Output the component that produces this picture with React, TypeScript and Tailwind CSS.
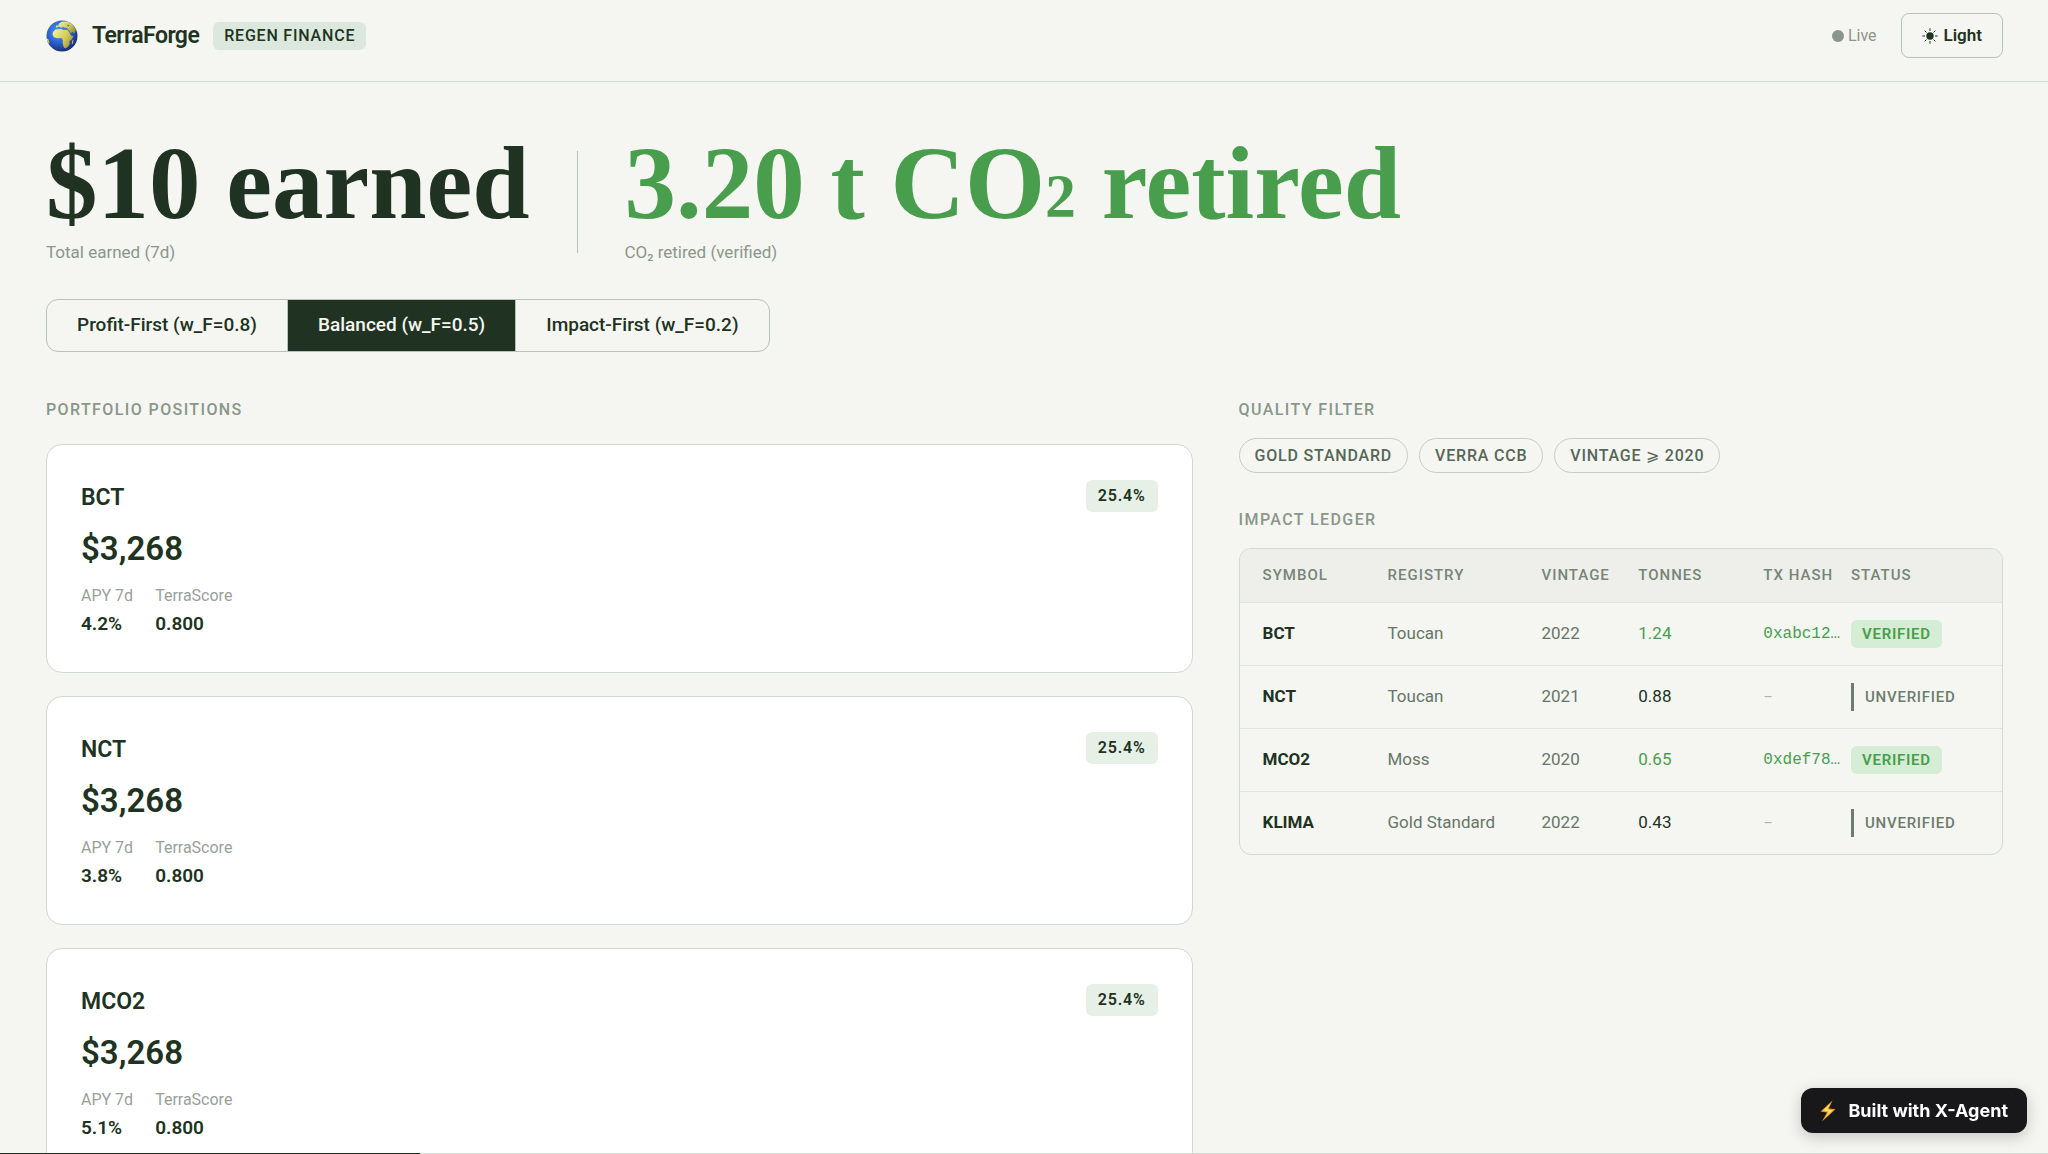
import { useState } from "react"
import { clsx } from "clsx"

type Position = { symbol: string; value: string; weight: string; apy: string; score: string }

type LedgerEntry = {
    symbol: string
    registry: string
    vintage: number
    tonnes: string
    hash?: string
}

const modes = ["Profit-First (w_F=0.8)", "Balanced (w_F=0.5)", "Impact-First (w_F=0.2)"]

const filters = ["GOLD STANDARD", "VERRA CCB", "VINTAGE ⩾ 2020"]

const positions: Position[] = [
    { symbol: "BCT", value: "$3,268", weight: "25.4%", apy: "4.2%", score: "0.800" },
    { symbol: "NCT", value: "$3,268", weight: "25.4%", apy: "3.8%", score: "0.800" },
    { symbol: "MCO2", value: "$3,268", weight: "25.4%", apy: "5.1%", score: "0.800" },
]

const ledger: LedgerEntry[] = [
    { symbol: "BCT", registry: "Toucan", vintage: 2022, tonnes: "1.24", hash: "0xabc12…" },
    { symbol: "NCT", registry: "Toucan", vintage: 2021, tonnes: "0.88" },
    { symbol: "MCO2", registry: "Moss", vintage: 2020, tonnes: "0.65", hash: "0xdef78…" },
    { symbol: "KLIMA", registry: "Gold Standard", vintage: 2022, tonnes: "0.43" },
]

function GlobeLogo() {
    return (
        <svg viewBox="0 0 32 32" className="size-8 shrink-0" aria-hidden="true">
            <defs>
                <radialGradient id="ocean" cx="0.4" cy="0.35" r="0.65">
                    <stop offset="0" stopColor="#4c9df0" />
                    <stop offset="0.6" stopColor="#2a5fcb" />
                    <stop offset="1" stopColor="#1c2f78" />
                </radialGradient>
                <linearGradient id="land" x1="0" y1="0.2" x2="1" y2="0.8">
                    <stop offset="0" stopColor="#f0f29a" />
                    <stop offset="0.6" stopColor="#cfc653" />
                    <stop offset="1" stopColor="#8d8a3c" />
                </linearGradient>
                <clipPath id="sphere">
                    <circle cx="16" cy="16" r="15.5" />
                </clipPath>
            </defs>
            <circle cx="16" cy="16" r="15.5" fill="url(#ocean)" />
            <g clipPath="url(#sphere)" fill="url(#land)">
                <path d="M7 12 9.500 9.500 15 9l2.500 1 4-.3 2 3 1.500 3 2.500.3-1.500 3-2.500 2.200.2 3-2 2.800-2.200 1.500-1.800-1.200-1-4 .2-3-1.600-2.300-4 .2-3.400-1-1.400-2.800z" />
                <path d="M10 7.800 10.300 5.500 12.500 5.600 13 3.500 16 1.500 22 1.500 27 5 30 10 28.500 13.500 26.500 12 24.500 13 22 9 18.500 8 17 6.800 15.500 7.800 13 6.500z" />
                <path d="M26.500 20.500 27.500 20 27 23.500 25.800 24z" />
                <path d="M0 18 2.500 19.500 3.500 22 2.800 25 0 23z" />
            </g>
            <path d="M16.500 7.500 20.500 8 22 9.200 18 8.800zM21.500 4.500 23.500 5.500 22.800 6.500 21 5.500z" fill="#3b74cf" />
        </svg>
    )
}

function SunIcon() {
    return (
        <svg viewBox="0 0 16 16" className="size-4" fill="none" stroke="currentColor" aria-hidden="true">
            <circle cx="8" cy="8" r="3.700" fill="currentColor" stroke="none" />
            <path d="M8 .3v2.700M8 13v2.700M.3 8H3M13 8h2.700M2.600 2.600l1.900 1.900M11.500 11.500l1.900 1.900M13.400 2.600l-1.900 1.900M4.500 11.500l-1.900 1.900" />
        </svg>
    )
}

function BoltIcon() {
    return (
        <svg viewBox="0 0 16 22" className="h-[22px] w-4" aria-hidden="true">
            <path d="M12.500 .5 .5 11.500 7 12.500 2 21.500 15.500 9.200 8.800 8.600z" fill="#f39b1d" />
            <path d="M10.500 3.500 3.200 10.600 8.800 11.500 5.500 17.500 13 10 7 9.400z" fill="#ffe27a" />
        </svg>
    )
}

function SectionTitle({ children }: { children: string }) {
    return <h2 className="text-base leading-5 font-medium tracking-[1.4px] text-[#8a968b]">{children}</h2>
}

function Header() {
    return (
        <header className="flex shrink-0 items-center justify-between border-b border-[#d0d9d2] pt-[13px] pr-[45px] pb-[23px] pl-[46px]">
            <div className="flex items-center gap-3.5">
                <GlobeLogo />
                <span className="text-[23px] leading-7 font-semibold tracking-tight">TerraForge</span>
                <span className="rounded-md bg-[#dce8dd] px-[11px] py-1 text-base leading-5 font-medium tracking-wider">
                    REGEN FINANCE
                </span>
            </div>
            <div className="flex items-center gap-6">
                <div className="flex items-center gap-1 text-base text-[#8a968b]">
                    <span className="size-3 rounded-full bg-[#8a968b]" />
                    Live
                </div>
                <button
                    type="button"
                    className="flex h-[45px] items-center gap-1.5 rounded-lg border border-[#b5c3b8] px-5 text-[17px] font-semibold"
                >
                    <SunIcon />
                    Light
                </button>
            </div>
        </header>
    )
}

function Hero() {
    return (
        <section className="flex items-start">
            <div>
                <div className="font-['Liberation_Serif',serif] text-[103px] leading-24 font-bold">$10 earned</div>
                <p className="mt-[9px] text-[17px] leading-6 text-[#8a968b]">Total earned (7d)</p>
            </div>
            <div className="mt-4 mr-[46px] ml-12 h-[102px] w-px bg-[#b5c3b8]" />
            <div>
                <div className="font-['Liberation_Serif',serif] text-[103px] leading-24 font-bold text-[#489e4c]">
                    3.20 t CO<span className="align-[22px] leading-[0]">₂</span> retired
                </div>
                <p className="mt-[9px] text-[17px] leading-6 text-[#8a968b]">CO₂ retired (verified)</p>
            </div>
        </section>
    )
}

function ModeSwitch() {
    const [mode, setMode] = useState(modes[1])

    return (
        <div className="mt-[35px] flex w-fit overflow-hidden rounded-xl border border-[#b5c3b8]">
            {modes.map((item) => (
                <button
                    key={item}
                    type="button"
                    aria-pressed={mode === item}
                    onClick={() => setMode(item)}
                    className={clsx(
                        "h-[51px] border-r border-[#b5c3b8] px-[30px] text-[19px] font-medium last:border-r-0",
                        mode === item && "bg-[#203322] text-[#f5f6f1]"
                    )}
                >
                    {item}
                </button>
            ))}
        </div>
    )
}

function PositionCard({ position }: { position: Position }) {
    return (
        <article className="rounded-2xl border border-[#d0d8d1] bg-white p-[34px] pt-[35px]">
            <div className="flex items-start justify-between">
                <h3 className="pt-1 text-[23px] leading-7 font-semibold">{position.symbol}</h3>
                <span className="rounded-md bg-[#e7f0e7] px-3 py-1.5 text-base leading-5 font-semibold tracking-wider">
                    {position.weight}
                </span>
            </div>
            <div className="mt-[11px] text-[33px] leading-[52px] font-semibold">{position.value}</div>
            <dl className="mt-[7px] flex gap-[22px]">
                <div>
                    <dt className="text-base leading-7 text-[#97a198]">APY 7d</dt>
                    <dd className="text-[19px] leading-7 font-semibold">{position.apy}</dd>
                </div>
                <div>
                    <dt className="text-base leading-7 text-[#97a198]">TerraScore</dt>
                    <dd className="text-[19px] leading-7 font-semibold">{position.score}</dd>
                </div>
            </dl>
        </article>
    )
}

function LedgerTable() {
    return (
        <div className="mt-[18px] overflow-hidden rounded-xl border border-[#d0d9d2]">
            <table className="w-full table-fixed text-left text-[17px]">
                <thead className="bg-[#eeefea] text-[15px] tracking-[1px] text-[#778578]">
                    <tr className="h-[53px] border-b border-[#e0e4df]">
                        <th className="w-[19.4%] pl-[23px] font-medium">SYMBOL</th>
                        <th className="w-[20.2%] font-medium">REGISTRY</th>
                        <th className="w-[12.7%] font-medium">VINTAGE</th>
                        <th className="w-[16.4%] font-medium">TONNES</th>
                        <th className="w-[11.5%] font-medium">TX HASH</th>
                        <th className="font-medium">STATUS</th>
                    </tr>
                </thead>
                <tbody>
                    {ledger.map((entry) => (
                        <tr key={entry.symbol} className="h-[63px] border-b border-[#dfe4df] last:border-b-0">
                            <td className="pl-[23px] font-bold">{entry.symbol}</td>
                            <td className="text-[#667568]">{entry.registry}</td>
                            <td className="text-[#667568]">{entry.vintage}</td>
                            <td className={clsx(entry.hash && "text-[#489e4c]")}>{entry.tonnes}</td>
                            <td className="font-['Liberation_Mono',monospace] text-base">
                                {entry.hash ? (
                                    <a href="#ledger" className="text-[#489e4c]">{entry.hash}</a>
                                ) : (
                                    <span className="text-[#abb4ac]">–</span>
                                )}
                            </td>
                            <td>
                                {entry.hash ? (
                                    <span className="inline-block rounded-md bg-[#d5edd5] px-[11px] py-1 text-[15px] leading-5 font-semibold tracking-wider text-[#489e4c]">
                                        VERIFIED
                                    </span>
                                ) : (
                                    <span className="inline-block border-l-3 border-[#6d7c6e] py-1 pl-[11px] text-[15px] leading-5 font-medium tracking-wider text-[#6d7c6e]">
                                        UNVERIFIED
                                    </span>
                                )}
                            </td>
                        </tr>
                    ))}
                </tbody>
            </table>
        </div>
    )
}

export default function App() {
    return (
        <div className="flex h-screen flex-col overflow-hidden bg-[#f5f6f1] font-[Roboto,sans-serif] text-[#203322]">
            <Header />
            <main className="min-h-0 flex-1 overflow-hidden pt-[53px] pr-[45px] pl-[46px]">
                <Hero />
                <ModeSwitch />
                <div className="mt-12 grid grid-cols-[3fr_2fr] items-start gap-[46px]">
                    <section>
                        <SectionTitle>PORTFOLIO POSITIONS</SectionTitle>
                        <div className="mt-6 flex flex-col gap-[23px]">
                            {positions.map((position) => (
                                <PositionCard key={position.symbol} position={position} />
                            ))}
                        </div>
                    </section>
                    <section id="ledger">
                        <SectionTitle>QUALITY FILTER</SectionTitle>
                        <div className="mt-[18px] mb-[37px] flex flex-wrap gap-[11px]">
                            {filters.map((filter) => (
                                <button
                                    key={filter}
                                    type="button"
                                    className="h-[35px] rounded-full border border-[#c3cec5] px-[15px] text-base font-medium tracking-wider text-[#566657]"
                                >
                                    {filter}
                                </button>
                            ))}
                        </div>
                        <SectionTitle>IMPACT LEDGER</SectionTitle>
                        <LedgerTable />
                    </section>
                </div>
            </main>

            {/* scroll progress */}
            <div className="fixed inset-x-0 bottom-0 h-px bg-[#d0d9d2]">
                <div className="h-full w-[20.5%] bg-[#203322]" />
            </div>

            <a
                href="#agent"
                className="fixed right-[21px] bottom-[21px] flex h-[45px] items-center gap-3 rounded-xl bg-[#18181b] px-[19px] font-[Inter,sans-serif] text-lg font-bold text-white shadow-[0_4px_16px_rgba(0,0,0,0.2)]"
            >
                <BoltIcon />
                Built with X-Agent
            </a>
        </div>
    )
}
